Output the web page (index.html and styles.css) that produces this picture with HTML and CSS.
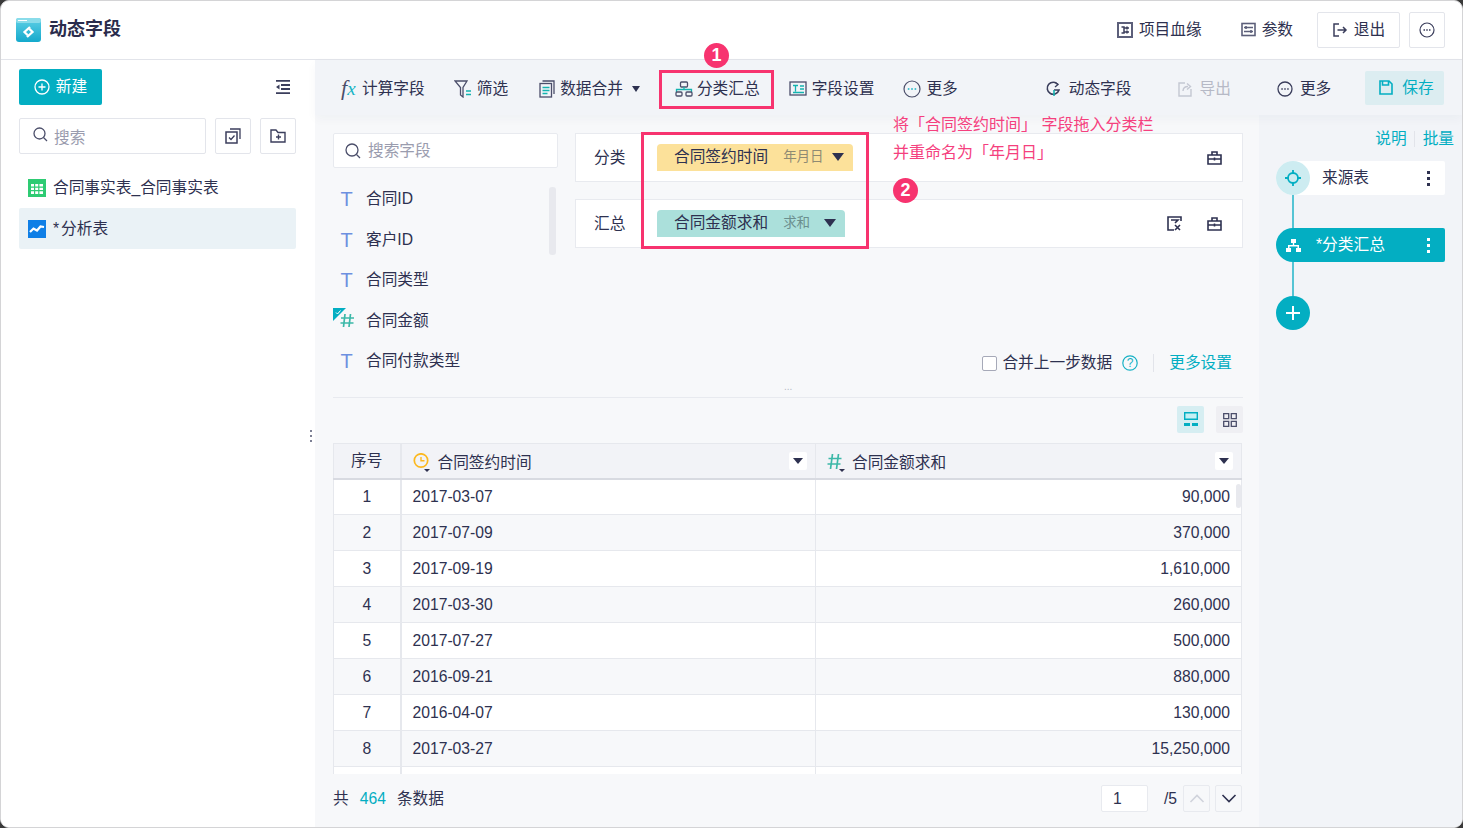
FILE: index.html
```html
<!DOCTYPE html>
<html lang="zh">
<head>
<meta charset="utf-8">
<title>动态字段</title>
<link rel="stylesheet" href="styles.css">
</head>
<body>
<div class="app">
  <header class="topbar">
    <svg class="logo" width="25" height="24" viewBox="0 0 25 24"><defs><linearGradient id="lg" x1="0" y1="0" x2="0" y2="1"><stop offset="0" stop-color="#5fd0e6"/><stop offset="1" stop-color="#14a9cc"/></linearGradient></defs><rect width="25" height="24" rx="3" fill="url(#lg)"/><rect x="0" y="0" width="25" height="5" rx="2" fill="#8adcea"/><rect x="2" y="2" width="9" height="1" fill="#fff"/><path d="M14 9L8.500 14l3 3M11 19l5.500-5-3-3" fill="none" stroke="#fff" stroke-width="2.300"/></svg>
    <h1 class="title">动态字段</h1>
    <div class="top-actions">
      <span class="top-link"><svg width="16" height="16" viewBox="0 0 16 16" fill="none" stroke="#5c5f7a" stroke-width="2"><rect x="1" y="1" width="14" height="14"/><path d="M4.500 5h2.500v6H4.500M7 6h5M7 10h5M10 4.500v3M10 8.500v3" stroke-width="1.500" stroke="#3b3e5c"/></svg>项目血缘</span>
      <span class="top-link top-param"><svg width="15" height="15" viewBox="0 0 15 15" fill="none" stroke="#5c5f7a" stroke-width="1.600"><rect x="1" y="1.500" width="13" height="12"/><path d="M3 5.500h9M3 9.500h9"/><path d="M5 4v3M10 8v3"/></svg>参数</span>
      <button class="top-btn exit"><svg width="16" height="16" viewBox="0 0 16 16" fill="none" stroke="#3b3e5c" stroke-width="1.500"><path d="M7 2H2v12h5M5.500 8H14M11 5l3 3-3 3"/></svg>退出</button>
      <button class="top-btn more"><svg width="16" height="16" viewBox="0 0 16 16"><circle cx="8" cy="8" r="7" fill="none" stroke="#3b3e5c" stroke-width="1.200"/><path d="M4.500 7.200h1.500v1.500h-1.500zM7.250 7.200h1.500v1.500h-1.500zM10 7.200h1.500v1.500h-1.500z" fill="#3b3e5c"/></svg></button>
    </div>
  </header>

  <div class="workspace">
    <aside class="sidebar">
      <div class="side-top">
        <button class="new-btn"><svg width="16" height="16" viewBox="0 0 16 16" fill="none" stroke="#fff" stroke-width="1.300"><circle cx="8" cy="8" r="7"/><path d="M8 4.500v7M4.500 8h7"/></svg>新建</button>
        <svg class="collapse" width="14" height="14" viewBox="0 0 14 14"><path d="M0 0h14v1.800H0zM5 4.100h9v1.800H5zM5 8.100h9v1.800H5zM0 12.200h14V14H0z" fill="#3b3e5c"/><path d="M0 7l3.500-2.600v5.200z" fill="#3b3e5c"/></svg>
      </div>
      <div class="side-search">
        <div class="search-box"><svg width="15" height="15" viewBox="0 0 15 15" fill="none" stroke="#4b4e6a" stroke-width="1.300"><circle cx="6.500" cy="6.500" r="5.500"/><path d="M10.500 10.500l3.500 3.500"/></svg><span>搜索</span></div>
        <button class="square-btn"><svg width="16" height="16" viewBox="0 0 16 16" fill="none" stroke="#3b3e5c" stroke-width="1.500"><rect x="1" y="4" width="11" height="11"/><path d="M4 9.500l2 2 3.500-4M5 1h10v10" stroke-width="1.300"/></svg></button>
        <button class="square-btn"><svg width="16" height="14" viewBox="0 0 16 14" fill="none" stroke="#3b3e5c" stroke-width="1.400"><path d="M1 1h5l2 2.500h7V13H1z"/><path d="M8.500 5.500v5M6 8h5"/></svg></button>
      </div>
      <ul class="tree">
        <li class="tree-item"><svg width="18" height="18" viewBox="0 0 18 18"><rect width="18" height="18" fill="#2ecb73"/><path d="M3 5h12v10H3z" fill="#fff"/><path d="M6.600 5v10M10.800 5v10M3 8.200h12M3 11.600h12" stroke="#2ecb73" stroke-width="1.200"/></svg><span>合同事实表_合同事实表</span></li>
        <li class="tree-item active"><svg width="18" height="18" viewBox="0 0 18 18"><rect width="18" height="18" fill="#0f7fe6"/><path d="M2 12l3.500-3.500 3.500 2 3.500-4 3.500 .5" fill="none" stroke="#fff" stroke-width="2.200"/></svg><span><span class="star">*</span>分析表</span></li>
      </ul>
    </aside>

    <div class="main">
      <nav class="toolbar">
        <span class="tool t-fx"><i class="fx">f<b>x</b></i>计算字段</span>
        <span class="tool t-filter"><svg width="19" height="18" viewBox="0 0 19 18" fill="none" stroke="#4b4e6a" stroke-width="1.300"><path d="M1 1h12L9 7.500V17l-2.500-2V7.500z"/><path d="M12 11h5M12 14.500h5" stroke="#14b3b0"/></svg>筛选</span>
        <span class="tool gap-wide"><svg width="16" height="18" viewBox="0 0 16 18" fill="none" stroke="#4b4e6a" stroke-width="1.300"><path d="M3.500 1H15v13"/><rect x="1" y="3.500" width="11.500" height="13.500"/><path d="M3.500 7.500h7M3.500 10.500h7M3.500 13.500h5" stroke="#14b3b0"/></svg>数据合并<i class="caret"></i></span>
        <span class="tool gap-widest"><svg width="18" height="16" viewBox="0 0 18 16" fill="none" stroke="#4b4e6a" stroke-width="1.300"><rect x="5.500" y="1" width="7" height="5" rx="1"/><path d="M1.500 11V8.500h15V11M9 6v2.500" stroke="#14b3b0"/><rect x="1" y="11" width="6" height="4" rx="1"/><rect x="11" y="11" width="6" height="4" rx="1"/></svg>分类汇总</span>
        <span class="tool"><svg width="18" height="15" viewBox="0 0 18 15" fill="none" stroke="#4b4e6a" stroke-width="1.300"><rect x="1" y="1" width="16" height="13"/><path d="M4 4.500h5M6.500 4.500v6M11 5h4M11 8h4M4 11.500h11" stroke="#14b3b0"/></svg>字段设置</span>
        <span class="tool"><svg width="18" height="18" viewBox="0 0 18 18"><circle cx="9" cy="9" r="8" fill="none" stroke="#4b4e6a" stroke-width="1.200"/><path d="M4.800 8.200h1.600v1.600H4.800zM8.200 8.200h1.600v1.600H8.200zM11.600 8.200h1.600v1.600h-1.600z" fill="#14b3c4"/></svg>更多</span>
        <span class="tool push-dyn dyn"><svg width="15" height="16" viewBox="0 0 15 16" fill="none" stroke="#3b3e5c" stroke-width="1.600"><path d="M12 3.500A6 6 0 1 0 13 9H8"/><path d="M8.500 1l3.500 2.500-3 2.500" stroke-width="1.300"/><path d="M8 9v6" stroke="#14b3b0"/></svg>动态字段</span>
        <span class="tool disabled push-export"><svg width="14" height="16" viewBox="0 0 14 16" fill="none" stroke="#c4c7d2" stroke-width="1.400"><path d="M7 2H1v13h12V8"/><path d="M5 10c0-3 2-4.500 5-4.500M9 2.500l3.500 3-3.500 3"/></svg>导出</span>
        <span class="tool push-more"><svg width="16" height="16" viewBox="0 0 16 16"><circle cx="8" cy="8" r="7" fill="none" stroke="#3b3e5c" stroke-width="1.300"/><path d="M4.300 7.300h1.500v1.500H4.300zM7.250 7.300h1.500v1.500h-1.500zM10.200 7.300h1.500v1.500h-1.500z" fill="#3b3e5c"/></svg>更多</span>
        <button class="save"><svg width="14" height="15" viewBox="0 0 14 15" fill="none" stroke="#03aec2" stroke-width="1.600"><path d="M1 1h9l3 3v10H1z"/><path d="M3.500 1v4h6V1"/></svg>保存</button>
      </nav>

      <div class="panels">
        <section class="center">
          <div class="designer">
            <div class="field-pane">
              <div class="field-search"><svg width="16" height="16" viewBox="0 0 16 16" fill="none" stroke="#4b4e6a" stroke-width="1.300"><circle cx="7" cy="7" r="6"/><path d="M11.500 11.500l3.500 3.500"/></svg><span>搜索字段</span></div>
              <ul class="fields">
                <li><i class="t">T</i>合同ID</li>
                <li><i class="t">T</i>客户ID</li>
                <li><i class="t">T</i>合同类型</li>
                <li class="marked"><svg class="hash-ic" width="14" height="15" viewBox="0 0 14 15" fill="none" stroke="#3cb8a8" stroke-width="1.700"><path d="M5 1L3.500 14M10.500 1L9 14M1 5h13M.5 10h13"/></svg><svg class="corner" width="13" height="13" viewBox="0 0 13 13"><path d="M0 0h13L0 13z" fill="#03aec2"/><path d="M3 4.500l1.500 1.500 3-3.500" fill="none" stroke="#fff" stroke-width="1"/></svg>合同金额</li>
                <li><i class="t">T</i>合同付款类型</li>
              </ul>
              <div class="thumb"></div>
            </div>
            <div class="config">
              <div class="card first">
                <span class="card-label">分类</span>
                <span class="pill yellow"><b>合同签约时间</b><small>年月日</small><i class="caret big"></i></span>
                <svg class="tool-icon" width="15" height="14" viewBox="0 0 15 14" fill="none" stroke="#2e3150" stroke-width="1.600"><path d="M1 4h13v9H1zM5 4V1h5v3M1 8h13M7.500 6.500v3"/></svg>
              </div>
              <div class="card">
                <span class="card-label">汇总</span>
                <span class="pill teal"><b>合同金额求和</b><small>求和</small><i class="caret big"></i></span>
                <svg class="tool-icon filter-x" width="15" height="15" viewBox="0 0 15 15" fill="none" stroke="#2e3150" stroke-width="1.600"><path d="M14 5V1H1v13h6"/><path d="M4 4h7L8 7M8 9l5 5M13 9l-5 5"/></svg>
                <svg class="tool-icon" width="15" height="14" viewBox="0 0 15 14" fill="none" stroke="#2e3150" stroke-width="1.600"><path d="M1 4h13v9H1zM5 4V1h5v3M1 8h13M7.500 6.500v3"/></svg>
              </div>
              <div class="merge-row">
                <label class="merge"><i class="check"></i>合并上一步数据</label>
                <svg class="help" width="16" height="16" viewBox="0 0 16 16"><circle cx="8" cy="8" r="7.200" fill="none" stroke="#16b1c4" stroke-width="1.200"/><text x="8" y="12" text-anchor="middle" class="help-q">?</text></svg>
                <i class="vsep"></i>
                <a class="link">更多设置</a>
              </div>
            </div>
            <span class="drag-dots">...</span>
          </div>

          <div class="views">
            <button class="view on"><svg width="14" height="15" viewBox="0 0 14 15"><path d="M.7.700h12.600v6.600H.7z" fill="#c5f0f4" stroke="#03aec2" stroke-width="1.400"/><path d="M0 11h6v3H0zM8 11h6v3H8z" fill="#03aec2"/></svg></button>
            <button class="view"><svg width="14" height="14" viewBox="0 0 14 14" fill="none" stroke="#4b4e6a" stroke-width="1.300"><path d="M.7.700h5v5h-5zM8.300.700h5v5h-5zM.7 8.300h5v5h-5zM8.300 8.300h5v5h-5z"/></svg></button>
          </div>

          <div class="table-wrap">
            <table class="data">
              <colgroup><col class="c-idx"><col class="c-date"><col class="c-sum"></colgroup>
              <thead>
                <tr>
                  <th class="idx">序号</th>
                  <th><span class="th-in"><svg width="17" height="19" viewBox="0 0 17 19"><circle cx="8" cy="7.500" r="6.700" fill="none" stroke="#fcb81e" stroke-width="1.700"/><path d="M8 4v3.800h3.500" fill="none" stroke="#fcb81e" stroke-width="1.400"/><path d="M11 16h6l-3 3z" fill="#2e3150"/></svg>合同签约时间<i class="menu"><i class="caret small"></i></i></span></th>
                  <th><span class="th-in th-num"><svg width="19" height="19" viewBox="0 0 19 19" fill="none" stroke="#3cb8a8" stroke-width="1.700"><path d="M5.500 1L3.500 16M11.500 1L9.500 16M1.500 5.500h13M.5 11h13"/><path d="M12 16h6l-3 3z" fill="#2e3150" stroke="none"/></svg>合同金额求和<i class="menu"><i class="caret small"></i></i></span></th>
                </tr>
              </thead>
              <tbody>
                <tr><td class="idx">1</td><td>2017-03-07</td><td class="num">90,000</td></tr>
                <tr><td class="idx">2</td><td>2017-07-09</td><td class="num">370,000</td></tr>
                <tr><td class="idx">3</td><td>2017-09-19</td><td class="num">1,610,000</td></tr>
                <tr><td class="idx">4</td><td>2017-03-30</td><td class="num">260,000</td></tr>
                <tr><td class="idx">5</td><td>2017-07-27</td><td class="num">500,000</td></tr>
                <tr><td class="idx">6</td><td>2016-09-21</td><td class="num">880,000</td></tr>
                <tr><td class="idx">7</td><td>2016-04-07</td><td class="num">130,000</td></tr>
                <tr><td class="idx">8</td><td>2017-03-27</td><td class="num">15,250,000</td></tr>
                <tr><td class="idx"></td><td></td><td class="num"></td></tr>
              </tbody>
            </table>
            <div class="table-thumb"></div>
          </div>

          <footer class="pager">
            <span class="total">共<em>464</em>条数据</span>
            <div class="pages">
              <span class="page-input">1</span>
              <span class="page-count">/5</span>
              <button class="page-btn"><svg width="16" height="9" viewBox="0 0 16 9" fill="none" stroke="#d0d3dc" stroke-width="1.600"><path d="M1.500 8L8 1.500 14.500 8"/></svg></button>
              <button class="page-btn"><svg width="16" height="9" viewBox="0 0 16 9" fill="none" stroke="#2e3150" stroke-width="1.600"><path d="M1.500 1L8 7.500 14.500 1"/></svg></button>
            </div>
          </footer>
        </section>

        <aside class="steps">
          <div class="step-links"><a class="link">说明</a><i class="vsep short"></i><a class="link">批量</a></div>
          <div class="flow">
            <div class="node source">
              <span class="node-icon"><svg width="16" height="16" viewBox="0 0 16 16" fill="none" stroke="#03aec2" stroke-width="1.800"><circle cx="8" cy="8" r="5"/><path d="M8 0v4M8 12v4M0 8h4M12 8h4"/></svg></span>
              <span class="node-name">来源表</span>
              <i class="dots"></i>
            </div>
            <i class="wire"></i>
            <div class="node current">
              <span class="node-icon"><svg width="15" height="13" viewBox="0 0 15 13"><path d="M5 0h5v4H8.200v2H13v3h2v4h-5V9h1.500V7.500h-8V9H5v4H0V9h2V6h4.800V4H5z" fill="#fff"/></svg></span>
              <span class="node-name">*分类汇总</span>
              <i class="dots"></i>
            </div>
            <i class="wire last"></i>
            <button class="add"><svg width="16" height="16" viewBox="0 0 16 16" stroke="#fff" stroke-width="2"><path d="M8 1v14M1 8h14"/></svg></button>
          </div>
        </aside>
      </div>
    </div>
  </div>

  <i class="splitter"></i>
  <div class="mark box-a"></div>
  <div class="mark box-b"></div>
  <span class="badge badge-a">1</span>
  <span class="badge badge-b">2</span>
  <p class="note">将「合同签约时间」 字段拖入分类栏<br>并重命名为「年月日」</p>
</div>
</body>
</html>
```
FILE: styles.css
```css
* { box-sizing: border-box; }
html, body { margin: 0; height: 100%; background: #3a3a3a; overflow: hidden; }
body { font: 15.7px/22px "Liberation Sans", "Noto Sans CJK SC", sans-serif; color: #2e3150; }
i, em { font-style: normal; }
ul { list-style: none; margin: 0; padding: 0; }
button { font: inherit; color: inherit; padding: 0; background: none; border: 0; }
svg { display: block; flex: none; }

.app { position: relative; width: 1463px; height: 828px; display: flex; flex-direction: column; background: #fff; border: 1px solid #d4d4d6; border-radius: 9px; overflow: hidden; }

.topbar { flex: none; height: 59px; display: flex; align-items: center; padding: 0 17px 0 15px; border-bottom: 1px solid #e2e4ea; }
.logo { margin-top: -1px; }
.title { margin: -2px 0 0 8px; font-size: 18px; font-weight: 700; color: #2a2c4c; }
.top-actions { margin-left: auto; display: flex; align-items: center; margin-top: -1px; }
.top-link { display: flex; align-items: center; gap: 6px; margin-right: 39px; }
.top-param { margin-right: 24px; }
.top-btn { height: 36px; display: flex; align-items: center; justify-content: center; gap: 6px; border: 1px solid #e3e5eb; border-radius: 2px; background: #fff; }
.exit { width: 83px; margin-right: 9px; }
.more { width: 36px; }

.workspace { flex: 1; display: flex; min-height: 0; }
.sidebar { flex: none; width: 314px; padding: 9px 18px 0; background: #fff; }
.side-top { display: flex; align-items: center; justify-content: space-between; padding-right: 7px; }
.new-btn { width: 83px; height: 36px; display: flex; align-items: center; justify-content: center; gap: 6px; background: #03aec2; color: #fff; border-radius: 2px; }
.side-search { display: flex; gap: 9px; margin-top: 13px; }
.search-box { width: 187px; height: 36px; display: flex; align-items: center; gap: 6px; padding-left: 13px; border: 1px solid #e3e5eb; border-radius: 2px; color: #9a9cae; }
.search-box svg { margin-top: -3px; }
.search-box span { padding-top: 4px; }
.square-btn { width: 36px; height: 36px; display: flex; align-items: center; justify-content: center; border: 1px solid #e3e5eb; border-radius: 2px; }
.tree { margin-top: 14px; width: 277px; }
.tree-item { height: 40px; display: flex; align-items: center; gap: 7px; padding-left: 9px; }
.tree-item.active { height: 41px; background: #eaf2f6; border-radius: 2px; }
.star { letter-spacing: 2px; }

.main { flex: 1; min-width: 0; display: flex; flex-direction: column; background: #f2f4f8; }
.toolbar { flex: none; height: 55px; display: flex; align-items: center; padding: 2px 18px 0 26px; box-shadow: 0 4px 10px rgba(40, 50, 90, .035); position: relative; }
.tool { display: flex; align-items: center; gap: 5px; margin-right: 29px; white-space: nowrap; }
.t-filter { gap: 4px; margin-right: 30px; }
.gap-wide { margin-left: 1px; }
.gap-widest { margin-left: 6px; gap: 4px; }
.fx { font: italic 22px/22px "Liberation Serif", serif; color: #4b4e6a; width: 16px; }
.fx b { font-weight: 400; font-size: 19px; color: #14b3c4; }
.caret { display: inline-block; width: 0; height: 0; margin-left: 4px; border-style: solid; border-width: 6px 4px 0; border-color: #2e3150 transparent transparent; }
.caret.big { border-width: 8px 6px 0; margin-left: 8px; }
.caret.small { border-width: 6px 5px 0; margin: 0; }
.push-dyn { margin-left: 59px; }
.dyn { gap: 8px; margin-right: 46px; }
.push-export { margin-right: 46px; gap: 8px; }
.push-more { margin-right: 34px; gap: 7px; }
.disabled { color: #b6b9c6; }
.save { width: 80px; height: 34px; margin-top: -2px; display: flex; align-items: center; gap: 9px; padding-left: 14px; background: #dcedf1; color: #03aec2; border-radius: 2px; }

.panels { flex: 1; display: flex; min-height: 0; }
.center { flex: none; width: 944px; display: flex; flex-direction: column; padding: 18px 16px 0 18px; background: #f7f8fa; }

.designer { position: relative; flex: none; height: 265px; display: flex; gap: 17px; border-bottom: 1px solid #e8eaef; }
.field-pane { position: relative; flex: none; width: 225px; }
.field-search { height: 35px; display: flex; align-items: center; gap: 7px; padding-left: 11px; background: #fff; border: 1px solid #e8eaef; border-radius: 2px; color: #9a9cae; }
.field-search span { padding-top: 1px; }
.fields { margin-top: 11px; }
.fields li { position: relative; height: 40.500px; display: flex; align-items: center; gap: 13px; padding-left: 7px; }
.t { width: 13px; font: 20px/22px "Liberation Sans", sans-serif; color: #6d90e0; text-align: center; }
.hash-ic { margin-right: -1px; }
.corner { position: absolute; left: 0; top: 7px; }
.thumb { position: absolute; left: 216px; top: 54px; width: 7px; height: 68px; background: #e8e9ee; border-radius: 3px; }

.config { flex: 1; min-width: 0; display: flex; flex-direction: column; }
.card { height: 49px; display: flex; align-items: center; padding: 0 20px 0 18px; background: #fff; border: 1px solid #e8eaef; }
.card.first { margin-bottom: 17px; }
.card-label { width: 63px; }
.pill { height: 27px; display: flex; align-items: center; padding: 0 9px 0 17px; border-radius: 4px 4px 0 0; margin-top: -1px; }
.pill b { font-weight: 400; }
.pill small { font-size: 13.500px; margin-left: 15px; color: #8f8a73; }
.yellow { background: #fce19a; }
.teal { background: #abe0db; }
.teal small { color: #6b8f8e; }
.teal .caret { margin-left: 14px; }
.yellow .caret { margin-left: 8px; }
.tool-icon { margin-left: auto; }
.filter-x + .tool-icon { margin-left: 25px; }
.merge-row { margin-top: 104px; display: flex; align-items: center; justify-content: flex-end; padding-right: 11px; }
.merge { display: flex; align-items: center; gap: 5px; }
.check { width: 15px; height: 15px; background: #fff; border: 1px solid #a6a9b8; border-radius: 2px; }
.help { margin-left: 10px; }
.help-q { font-size: 12px; fill: #16b1c4; }
.vsep { width: 1px; height: 18px; margin: 0 15px; background: #e2e4ea; }
.link { color: #03aec2; }
.drag-dots { position: absolute; left: 451px; bottom: 5px; font-size: 10px; line-height: 10px; color: #b6b9c6; }

.views { flex: none; height: 45px; display: flex; justify-content: flex-end; align-items: flex-start; gap: 12px; padding-top: 8px; }
.view { width: 27px; height: 27px; display: flex; align-items: center; justify-content: center; background: #efeff3; border-radius: 2px; }
.view.on { background: #d6eef2; }

.table-wrap { position: relative; flex: none; width: 909px; height: 331px; overflow: hidden; }
.data { width: 909px; table-layout: fixed; border-collapse: collapse; border: 1px solid #e6e8ed; background: #fff; }
.c-idx { width: 67px; }
.c-date { width: 415px; }
.data th { height: 35px; font-weight: 400; text-align: left; background: #f2f3f7; border-bottom: 2px solid #d8dae1; border-right: 1px solid #e6e8ed; padding: 0; }
.data th.idx { border-right: 2px solid #e6e8ed; text-align: center; }
.th-in { display: flex; align-items: center; gap: 8px; padding: 4px 8px 0 11px; }
.th-num { gap: 6px; padding-left: 11px; }
.menu { margin-left: auto; width: 18px; height: 18px; margin-top: -4px; display: flex; align-items: center; justify-content: center; background: #fff; border-radius: 2px; }
.data td { height: 36px; padding: 0 11px; border-bottom: 1px solid #e6e8ed; border-right: 1px solid #e6e8ed; }
.data td.idx { text-align: center; border-right: 2px solid #e6e8ed; padding: 0; }
.data td.num { text-align: right; }
.data tbody tr:nth-child(even) td { background: #f7f8fa; }
.table-thumb { position: absolute; right: 1px; top: 41px; width: 5px; height: 24px; background: #e8e9ee; border-radius: 3px; }

.pager { flex: 1; display: flex; align-items: flex-start; justify-content: space-between; padding: 11px 1px 0 0; }
.total { padding-top: 3px; }
.total em { margin: 0 11px; color: #03aec2; }
.pages { display: flex; align-items: center; gap: 5px; }
.page-input { width: 47px; height: 27px; line-height: 26px; padding-left: 11px; margin-right: 11px; background: #fff; border: 1px solid #e8eaef; border-radius: 2px; }
.page-count { margin-right: 1px; }
.page-btn { width: 27px; height: 27px; display: flex; align-items: center; justify-content: center; border: 1px solid #e8eaef; border-radius: 2px; }

.steps { flex: 1; min-width: 0; padding: 13px 0 0 17px; }
.step-links { display: flex; align-items: center; justify-content: flex-end; padding-right: 8px; height: 22px; }
.step-links .vsep { margin: 0 8px 0 7px; height: 16px; }
.flow { margin-top: 11px; width: 169px; display: flex; flex-direction: column; }
.node { height: 34px; display: flex; align-items: center; border-radius: 17px 2px 2px 17px; padding-right: 15px; background: #fff; }
.node-icon { width: 34px; height: 34px; display: flex; align-items: center; justify-content: center; border-radius: 50%; }
.source .node-icon { background: #cdecf1; }
.node-name { margin-left: 12px; }
.current { background: #03aec2; color: #fff; }
.current .node-name { margin-left: 6px; }
.dots { margin-left: auto; width: 3px; height: 3px; background: currentColor; box-shadow: 0 -6px 0 currentColor, 0 6px 0 currentColor; }
.wire { display: block; width: 2px; height: 33px; margin-left: 16px; background: #55c4d4; }
.wire.last { height: 34px; }
.add { width: 34px; height: 34px; display: flex; align-items: center; justify-content: center; border-radius: 50%; background: #03aec2; }

.splitter { position: absolute; left: 309px; top: 434px; width: 2px; height: 2px; background: #7d8094; box-shadow: 0 -5px 0 #7d8094, 0 5px 0 #7d8094; }
.mark { position: absolute; border: 3px solid #f7336f; pointer-events: none; }
.box-a { left: 658px; top: 69px; width: 115px; height: 39px; }
.box-b { left: 640px; top: 131px; width: 228px; height: 117px; }
.badge { position: absolute; width: 25px; height: 25px; border-radius: 50%; background: #f7336f; color: #fff; font-weight: 700; font-size: 18px; line-height: 25px; text-align: center; }
.badge-a { left: 703px; top: 42px; }
.badge-b { left: 892px; top: 177px; }
.note { position: absolute; left: 892px; top: 110px; margin: 0; font-size: 16px; line-height: 28px; color: #f5407e; white-space: nowrap; }
```
